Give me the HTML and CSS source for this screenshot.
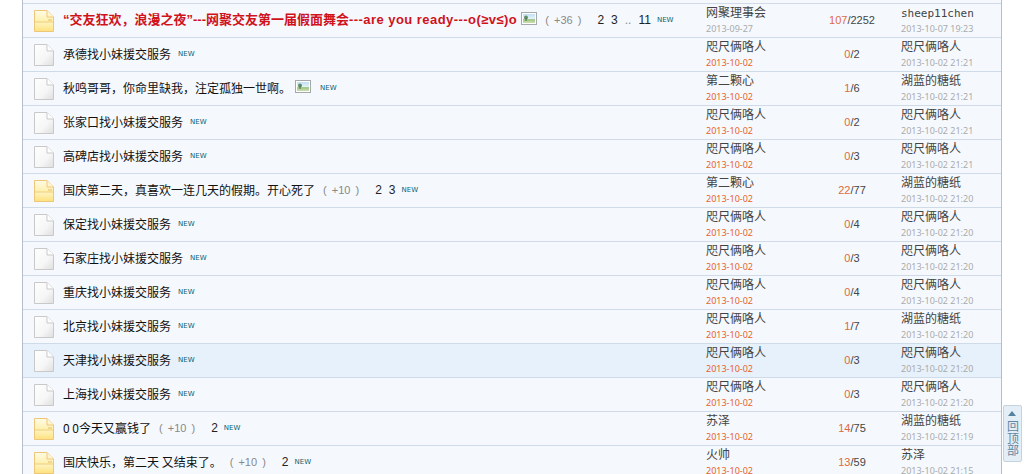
FILE: index.html
```html
<!DOCTYPE html>
<html lang="zh">
<head>
<meta charset="utf-8">
<title>列表</title>
<link rel="stylesheet" href="styles.css">
</head>
<body>
<svg class="defs" width="0" height="0">
  <defs>
    <linearGradient id="gy" x1="0" y1="0" x2="0" y2="1"><stop offset="0" stop-color="#fffbe6"/><stop offset=".52" stop-color="#fdf0ae"/><stop offset=".55" stop-color="#fff5c4"/><stop offset="1" stop-color="#fde17c"/></linearGradient>
    <linearGradient id="gg" x1="0" y1="0" x2="1" y2="1"><stop offset="0" stop-color="#fff"/><stop offset=".6" stop-color="#f6f6f6"/><stop offset="1" stop-color="#dedede"/></linearGradient>
    <linearGradient id="gp" x1="0" y1="0" x2="0" y2="1"><stop offset="0" stop-color="#bfe0f4"/><stop offset=".55" stop-color="#e6f3f6"/><stop offset=".62" stop-color="#9cc384"/><stop offset="1" stop-color="#cfe0ae"/></linearGradient>
    <symbol id="fh" viewBox="0 0 20 22"><path d="M.5.5H13L19.5 7V21.5H.5Z" fill="url(#gy)" stroke="#eec67a"/><path d="M13 .5V7H19.5" fill="#fff6cf" stroke="#eec67a"/><path d="M1 12H19" stroke="#f0cc78"/><path d="M14 10H18" stroke="#e8bc60"/></symbol>
    <symbol id="fn" viewBox="0 0 20 22"><path d="M.5.5H13L19.5 7V21.5H.5Z" fill="url(#gg)" stroke="#c9c9c9"/><path d="M13 .5V7H19.5" fill="#fff" stroke="#c9c9c9"/></symbol>
    <symbol id="pic" viewBox="0 0 16 13"><rect x=".5" y=".5" width="15" height="12" fill="#fff" stroke="#a4aaaa"/><rect x="2" y="2" width="12" height="9" fill="url(#gp)"/><circle cx="5" cy="5.5" r="2" fill="#5f8f68"/><path d="M5 6V9" stroke="#4f6f48"/></symbol>
  </defs>
</svg>
<main class="list">
  <div class="row">
    <svg class="file"><use href="#fh"/></svg>
    <div class="title"><a class="hot">“交友狂欢，浪漫之夜”---网聚交友第一届假面舞会<span class="latin">---are you ready---o(≥v≤)o</span></a><svg class="pic"><use href="#pic"/></svg><span class="more">( +36 )</span><span class="pages"><span>2</span><span>3</span><span class="dots">..</span><span>11</span></span><span class="new">NEW</span></div>
    <div class="who"><span>网聚理事会</span><time class="old">2013-09-27</time></div>
    <div class="num"><b>107</b>/2252</div>
    <div class="who"><span class="mono">sheep11chen</span><time class="old">2013-10-07 19:23</time></div>
  </div>
  <div class="row">
    <svg class="file"><use href="#fn"/></svg>
    <div class="title"><a>承德找小妹援交服务</a><span class="new">NEW</span></div>
    <div class="who"><span>咫尺俩咯人</span><time>2013-10-02</time></div>
    <div class="num"><b>0</b>/2</div>
    <div class="who"><span>咫尺俩咯人</span><time class="old">2013-10-02 21:21</time></div>
  </div>
  <div class="row">
    <svg class="file"><use href="#fn"/></svg>
    <div class="title"><a>秋鸣哥哥，你命里缺我，注定孤独一世啊。</a><svg class="pic"><use href="#pic"/></svg><span class="new">NEW</span></div>
    <div class="who"><span>第二颗心</span><time>2013-10-02</time></div>
    <div class="num"><b>1</b>/6</div>
    <div class="who"><span>湖蓝的糖纸</span><time class="old">2013-10-02 21:21</time></div>
  </div>
  <div class="row">
    <svg class="file"><use href="#fn"/></svg>
    <div class="title"><a>张家口找小妹援交服务</a><span class="new">NEW</span></div>
    <div class="who"><span>咫尺俩咯人</span><time>2013-10-02</time></div>
    <div class="num"><b>0</b>/2</div>
    <div class="who"><span>咫尺俩咯人</span><time class="old">2013-10-02 21:21</time></div>
  </div>
  <div class="row">
    <svg class="file"><use href="#fn"/></svg>
    <div class="title"><a>高碑店找小妹援交服务</a><span class="new">NEW</span></div>
    <div class="who"><span>咫尺俩咯人</span><time>2013-10-02</time></div>
    <div class="num"><b>0</b>/3</div>
    <div class="who"><span>咫尺俩咯人</span><time class="old">2013-10-02 21:21</time></div>
  </div>
  <div class="row">
    <svg class="file"><use href="#fh"/></svg>
    <div class="title"><a>国庆第二天，真喜欢一连几天的假期。开心死了</a><span class="more">( +10 )</span><span class="pages"><span>2</span><span>3</span></span><span class="new">NEW</span></div>
    <div class="who"><span>第二颗心</span><time>2013-10-02</time></div>
    <div class="num"><b>22</b>/77</div>
    <div class="who"><span>湖蓝的糖纸</span><time class="old">2013-10-02 21:20</time></div>
  </div>
  <div class="row">
    <svg class="file"><use href="#fn"/></svg>
    <div class="title"><a>保定找小妹援交服务</a><span class="new">NEW</span></div>
    <div class="who"><span>咫尺俩咯人</span><time>2013-10-02</time></div>
    <div class="num"><b>0</b>/4</div>
    <div class="who"><span>咫尺俩咯人</span><time class="old">2013-10-02 21:20</time></div>
  </div>
  <div class="row">
    <svg class="file"><use href="#fn"/></svg>
    <div class="title"><a>石家庄找小妹援交服务</a><span class="new">NEW</span></div>
    <div class="who"><span>咫尺俩咯人</span><time>2013-10-02</time></div>
    <div class="num"><b>0</b>/3</div>
    <div class="who"><span>咫尺俩咯人</span><time class="old">2013-10-02 21:20</time></div>
  </div>
  <div class="row">
    <svg class="file"><use href="#fn"/></svg>
    <div class="title"><a>重庆找小妹援交服务</a><span class="new">NEW</span></div>
    <div class="who"><span>咫尺俩咯人</span><time>2013-10-02</time></div>
    <div class="num"><b>0</b>/4</div>
    <div class="who"><span>咫尺俩咯人</span><time class="old">2013-10-02 21:20</time></div>
  </div>
  <div class="row">
    <svg class="file"><use href="#fn"/></svg>
    <div class="title"><a>北京找小妹援交服务</a><span class="new">NEW</span></div>
    <div class="who"><span>咫尺俩咯人</span><time>2013-10-02</time></div>
    <div class="num"><b>1</b>/7</div>
    <div class="who"><span>湖蓝的糖纸</span><time class="old">2013-10-02 21:20</time></div>
  </div>
  <div class="row active">
    <svg class="file"><use href="#fn"/></svg>
    <div class="title"><a>天津找小妹援交服务</a><span class="new">NEW</span></div>
    <div class="who"><span>咫尺俩咯人</span><time>2013-10-02</time></div>
    <div class="num"><b>0</b>/3</div>
    <div class="who"><span>咫尺俩咯人</span><time class="old">2013-10-02 21:20</time></div>
  </div>
  <div class="row">
    <svg class="file"><use href="#fn"/></svg>
    <div class="title"><a>上海找小妹援交服务</a><span class="new">NEW</span></div>
    <div class="who"><span>咫尺俩咯人</span><time>2013-10-02</time></div>
    <div class="num"><b>0</b>/3</div>
    <div class="who"><span>咫尺俩咯人</span><time class="old">2013-10-02 21:20</time></div>
  </div>
  <div class="row">
    <svg class="file"><use href="#fh"/></svg>
    <div class="title"><a>0 0今天又赢钱了</a><span class="more">( +10 )</span><span class="pages"><span>2</span></span><span class="new">NEW</span></div>
    <div class="who"><span>苏泽</span><time>2013-10-02</time></div>
    <div class="num"><b>14</b>/75</div>
    <div class="who"><span>湖蓝的糖纸</span><time class="old">2013-10-02 21:19</time></div>
  </div>
  <div class="row">
    <svg class="file"><use href="#fh"/></svg>
    <div class="title"><a>国庆快乐，第二天 又结束了。</a><span class="more">( +10 )</span><span class="pages"><span>2</span></span><span class="new">NEW</span></div>
    <div class="who"><span>火帅</span><time>2013-10-02</time></div>
    <div class="num"><b>13</b>/59</div>
    <div class="who"><span>苏泽</span><time class="old">2013-10-02 21:15</time></div>
  </div>
</main>
<a class="top"><i></i>回顶部</a>
</body>
</html>
```
FILE: styles.css
```css
html, body { margin: 0; height: 474px; overflow: hidden; background: #fff; }
body { font: 12px/16px "Noto Sans CJK SC", "Liberation Sans", sans-serif; color: #222; }
.defs { display: block; height: 0; }
.list {
  width: 978px;
  margin-left: 22px;
  padding-top: 3px;
  background: #f5f9fe;
  border-left: 1px solid #b4bdc9;
  border-right: 1px solid #b4bdc9;
}
.row {
  display: grid;
  grid-template-columns: 40px 643px 97px 98px 1fr;
  align-items: center;
  height: 33px;
  background: #f5f9fe;
  border-top: 1px solid #cfdbe8;
}
.row.active { background: #e7f1fb; }
.file { width: 20px; height: 22px; margin-left: 11px; }
.title { display: flex; align-items: center; white-space: nowrap; color: #222; margin-top: -2px; }
.title a { color: #111; }
.title a.hot { color: #d0121b; font: 700 13px/16px "Liberation Sans", "Noto Sans CJK SC", sans-serif; }
.latin { letter-spacing: .45px; }
.pic { width: 16px; height: 13px; margin: 0 0 2px 4px; flex: none; }
.more { color: #888; margin-left: 8px; font: 11px/16px "Liberation Sans", sans-serif; word-spacing: 2px; }
.pages { display: flex; gap: 7px; margin-left: 16px; color: #222; font: 12px/16px "Liberation Sans", sans-serif; }
.dots { color: #888; }
.new {
  margin-left: 7px;
  font: 7px/8px "DejaVu Sans", sans-serif;
  color: #0c5f72;
}
.pic + .new { margin-left: 9px; }
.pages + .new { margin-left: 6px; }
.who { display: flex; flex-direction: column; line-height: 16px; color: #444; white-space: nowrap; }
.mono { font: 11px/16px "DejaVu Sans Mono", monospace; padding-top: 2px; margin-bottom: -2px; }
time { font: 9px/16px "Noto Sans", sans-serif; color: #e8622a; margin-top: 1px; }
time.old { color: #aaa; }
.num { text-align: center; font: 11px/16px "Liberation Sans", sans-serif; color: #444; margin-top: -2px; }
.num b { font-weight: 400; color: #e0693a; }
.top {
  position: fixed;
  left: 1003px;
  top: 405px;
  width: 19px;
  height: 57px;
  box-sizing: border-box;
  border: 1px solid #c7d3dc;
  border-radius: 2px;
  background: #e4eef6;
  color: #5f87a3;
  font-size: 12px;
  line-height: 12px;
  text-align: center;
  padding: 14px 3px 0;
}
.top i {
  position: absolute;
  left: 4px;
  top: 5px;
  border: 4px solid transparent;
  border-top: 0;
  border-bottom: 5px solid #55819f;
}
```
